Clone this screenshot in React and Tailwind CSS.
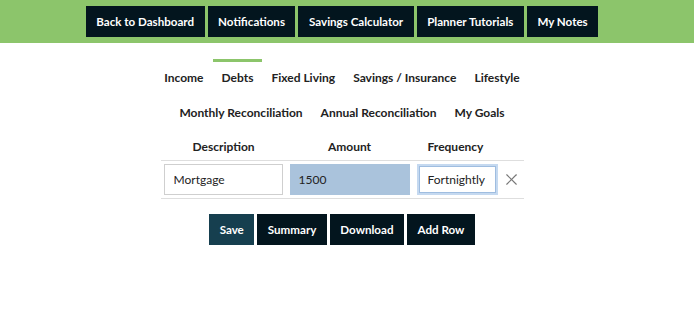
import React from "react";
import { X } from "lucide-react";

const navLinks = ["Back to Dashboard", "Notifications", "Savings Calculator", "Planner Tutorials", "My Notes"];
const tabsTop = ["Income", "Debts", "Fixed Living", "Savings / Insurance", "Lifestyle"];
const tabsBottom = ["Monthly Reconciliation", "Annual Reconciliation", "My Goals"];

const Tab = ({ label, active }) => (
  <div
    className={
      "h-[35px] px-[9px] flex items-center border-t-[3px] text-[12px] font-bold text-[#222] " +
      (active ? "border-[#8cc56b]" : "border-transparent")
    }
  >
    {label}
  </div>
);

export default function App() {
  return (
    <div className="min-h-screen bg-white" style={{ fontFamily: "Lato, 'Open Sans', sans-serif" }}>
      {/* top nav */}
      <div className="h-[43px] bg-[#8cc56b] flex justify-center pt-[6px] gap-[3px] pr-[10px]">
        {navLinks.map((l) => (
          <button
            key={l}
            className="h-[31px] px-[10.5px] bg-[#03151e] text-white text-[11.6px] font-bold"
          >
            {l}
          </button>
        ))}
      </div>

      <div className="pr-[10px] flex flex-col items-center">
        {/* tabs */}
        <div className="mt-[16px] flex">
          {tabsTop.map((t) => (
            <Tab key={t} label={t} active={t === "Debts"} />
          ))}
        </div>
        <div className="flex">
          {tabsBottom.map((t) => (
            <Tab key={t} label={t} />
          ))}
        </div>

        {/* table */}
        <div className="mt-[5px] w-[363px] text-[12px] text-[#222]">
          <div className="flex h-[26px] items-center font-bold">
            <div className="w-[126px] text-center">Description</div>
            <div className="w-[126px] text-center">Amount</div>
            <div className="w-[86px] text-center">Frequency</div>
          </div>
          <div className="flex items-center h-[39px] border-y border-[#dedede]">
            <div className="w-[126px] pl-[3px]">
              <input
                readOnly
                value="Mortgage"
                className="w-[119px] h-[31px] border border-[#cfcfcf] px-[9px] outline-none"
              />
            </div>
            <div className="w-[126px] pl-[3px]">
              <input
                readOnly
                value="1500"
                className="w-[120px] h-[31px] bg-[#aac3dc] px-[9px] outline-none"
              />
            </div>
            <div className="w-[86px] pl-[4px]">
              <div className="w-[81px] h-[31px] border-2 border-[#c5d9f0] bg-white">
                <input
                  readOnly
                  value="Fortnightly"
                  className="w-full h-full border border-[#9fbde0] px-[8px] outline-none"
                />
              </div>
            </div>
            <div className="flex-1 flex justify-center">
              <X size={19} strokeWidth={1.4} color="#777" />
            </div>
          </div>
        </div>

        {/* actions */}
        <div className="mt-[15px] flex gap-[3px]">
          <button className="h-[31px] px-[10.5px] bg-[#163f4f] text-white text-[11.6px] font-bold">Save</button>
          <button className="h-[31px] px-[10.5px] bg-[#03151e] text-white text-[11.6px] font-bold">Summary</button>
          <button className="h-[31px] px-[10.5px] bg-[#03151e] text-white text-[11.6px] font-bold">Download</button>
          <button className="h-[31px] px-[10.5px] bg-[#03151e] text-white text-[11.6px] font-bold">Add Row</button>
        </div>
      </div>
    </div>
  );
}
